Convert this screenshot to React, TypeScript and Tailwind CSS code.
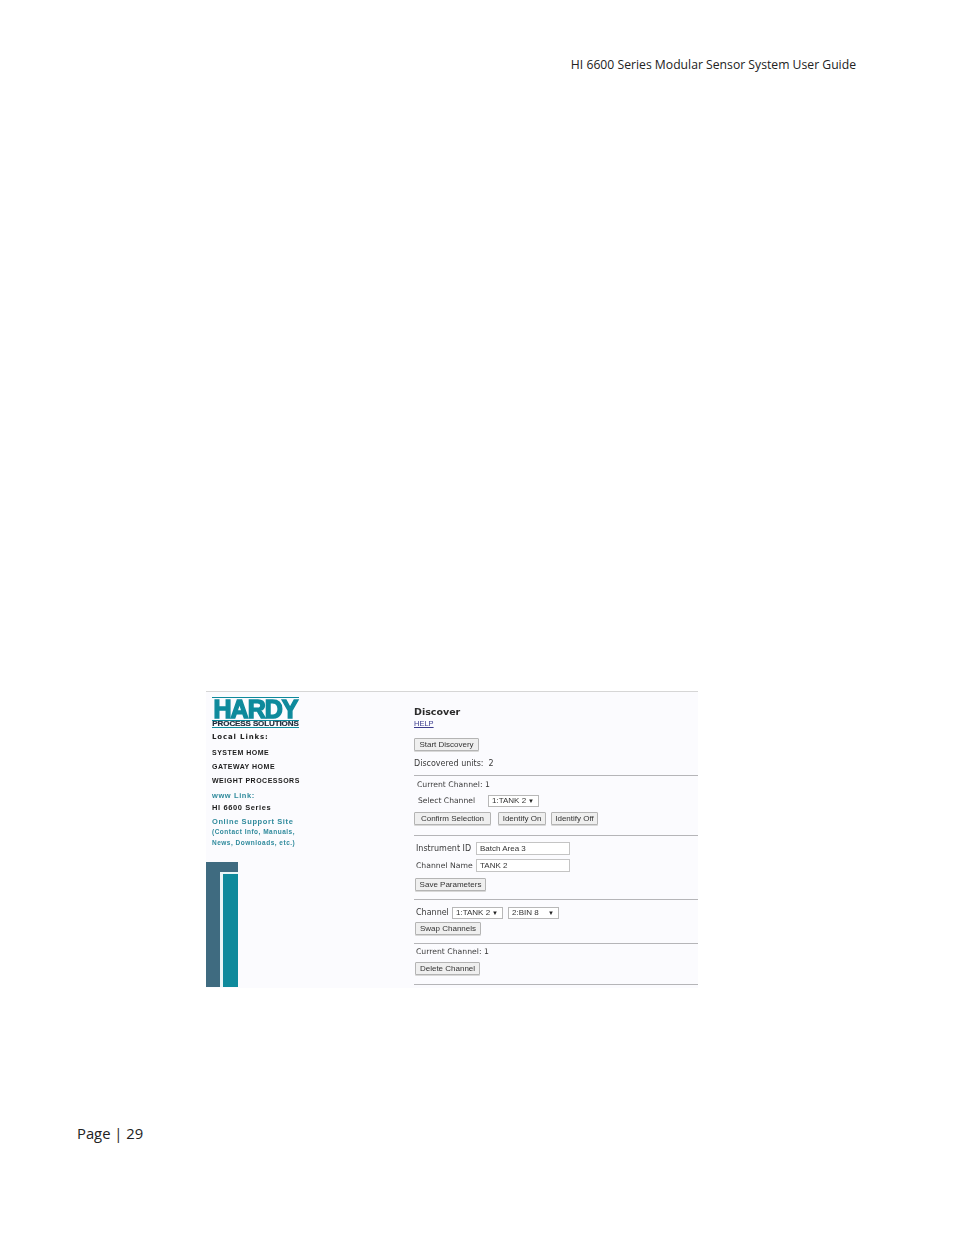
import React from 'react';

const NavLink: React.FC<{ label: string; className?: string }> = ({ label, className }) => (
    <div className={`font-['Liberation_Sans',sans-serif] font-bold leading-[10px] whitespace-nowrap ${className ?? ''}`}>
        {label}
    </div>
);

const FakeButton: React.FC<{ label: string; className?: string }> = ({ label, className }) => (
    <div className={`h-[13px] flex items-center justify-center bg-[#efefef] border border-[#b4b4b4] rounded-[1px] text-[8px] text-[#333] font-['Liberation_Sans',sans-serif] shadow-[0_1px_0_#d8d8d8] whitespace-nowrap ${className ?? ''}`}>
        {label}
    </div>
);

const FakeSelect: React.FC<{ label: string; className?: string }> = ({ label, className }) => (
    <div className={`h-[12px] flex items-center justify-between pl-[3px] pr-[4px] bg-white border border-[#b8b8b8] text-[8px] text-[#333] font-['Liberation_Sans',sans-serif] whitespace-nowrap ${className ?? ''}`}>
        <span>{label}</span>
        <span className="text-[6px] text-[#222]">▼</span>
    </div>
);

const Label: React.FC<{ children: React.ReactNode; className?: string }> = ({ children, className }) => (
    <div className={`leading-[12px] text-[#3a3a3a] whitespace-nowrap font-['DejaVu_Sans',sans-serif] ${className ?? 'text-[8px]'}`}>
        {children}
    </div>
);

const FakeInput: React.FC<{ value: string }> = ({ value }) => (
    <div className="w-[94px] h-[13px] flex items-center pl-[3px] bg-white border border-[#c4c4c4] text-[8px] text-[#333] font-['Liberation_Sans',sans-serif]">
        {value}
    </div>
);

const Divider: React.FC = () => <div className="h-[1px] bg-[#b5b5b8]" />;

export default function App() {
    return (
        <div className="w-[954px] h-[1235px] flex flex-col bg-white overflow-hidden font-['Open_Sans',sans-serif]">
            {/* Header */}
            <div className="pt-[56px] pr-[98px] text-right text-[12.2px] leading-[18px] text-[#222]">
                HI 6600 Series Modular Sensor System User Guide
            </div>

            {/* Screenshot figure */}
            <div className="mt-[617px] ml-[206px] w-[492px] h-[297px] flex bg-[#fbfbfe] border-t border-[#d6d6d6] blur-[0.3px]">
                {/* Left nav */}
                <div className="w-[208px] flex flex-col">
                    <div className="pl-[6px] pt-[5px]">
                        <div className="w-[87px] h-[31px] flex flex-col">
                            <div className="h-[1px] bg-[#0e8a9c]" />
                            <div className="h-[20px] mt-[1px] flex items-center justify-center font-['Liberation_Sans',sans-serif] font-bold text-[25px] leading-[20px] tracking-[-1px] whitespace-nowrap text-[#0e8a9c] [-webkit-text-stroke:1.4px_#0e8a9c]">
                                HARDY
                            </div>
                            <div className="h-[1px] mt-[1px] bg-[#0e8a9c]" />
                            <div className="h-[6px] flex items-center justify-center font-['Liberation_Sans',sans-serif] font-bold text-[8px] leading-[6px] tracking-[-0.1px] text-[#1d2b3a] whitespace-nowrap [-webkit-text-stroke:0.2px_#1d2b3a]">
                                PROCESS SOLUTIONS
                            </div>
                            <div className="h-[1px] bg-[#0e8a9c]" />
                        </div>
                        <div className="mt-[4px] font-['DejaVu_Sans',sans-serif] font-bold text-[7px] leading-[10px] tracking-[0.85px] text-[#222]">
                            Local Links:
                        </div>
                        <NavLink label="SYSTEM HOME" className="mt-[6px] text-[7px] tracking-[0.5px] text-[#1c1c1c]" />
                        <NavLink label="GATEWAY HOME" className="mt-[4px] text-[7px] tracking-[0.5px] text-[#1c1c1c]" />
                        <NavLink label="WEIGHT PROCESSORS" className="mt-[4px] text-[7px] tracking-[0.5px] text-[#1c1c1c]" />
                        <NavLink label="www Link:" className="mt-[5px] text-[7.5px] tracking-[0.6px] text-[#2f8a9c]" />
                        <NavLink label="HI 6600 Series" className="mt-[2px] text-[7.5px] tracking-[0.6px] text-[#1c1c1c]" />
                        <NavLink label="Online Support Site" className="mt-[4px] text-[7.5px] tracking-[0.6px] text-[#2f8a9c]" />
                        <div className="font-['Liberation_Sans',sans-serif] font-bold text-[6.5px] leading-[10.5px] tracking-[0.5px] text-[#2f8a9c] whitespace-nowrap">
                            (Contact Info, Manuals,
                            <br />
                            News, Downloads, etc.)
                        </div>
                    </div>
                    <div className="mt-auto mb-[1px] w-[32px] h-[125px] pt-[10px] pl-[14px] bg-[#3f6b80]">
                        <div className="h-full border-l-[3px] border-t-[2px] border-[#eaf6f8] bg-[#0e8a9c]" />
                    </div>
                </div>

                {/* Right form */}
                <div className="flex-1 flex flex-col">
                    <div className="h-[83px] flex flex-col">
                        <div className="mt-[14px] font-['DejaVu_Sans',sans-serif] font-bold text-[9.5px] leading-[12px] text-[#2b2b2b]">
                            Discover
                        </div>
                        <div className="text-[7.5px] leading-[11px] text-[#3a3a8c] underline font-['Liberation_Sans',sans-serif]">
                            HELP
                        </div>
                        <FakeButton label="Start Discovery" className="w-[65px] mt-[9px]" />
                        <Label className="mt-[7px] text-[8px]">Discovered units:&nbsp; 2</Label>
                    </div>
                    <Divider />
                    <div className="h-[59px] flex flex-col pt-[3px]">
                        <Label className="ml-[3px] text-[7.7px]">Current Channel: 1</Label>
                        <div className="mt-[4px] ml-[4px] flex items-center">
                            <Label className="w-[70px] text-[7.6px]">Select Channel</Label>
                            <FakeSelect label="1:TANK 2" className="w-[51px]" />
                        </div>
                        <div className="mt-[5px] flex">
                            <FakeButton label="Confirm Selection" className="w-[77px] font-['DejaVu_Sans',sans-serif] text-[8px]" />
                            <FakeButton label="Identify On" className="w-[48px] ml-[7px]" />
                            <FakeButton label="Identify Off" className="w-[47px] ml-[5px]" />
                        </div>
                    </div>
                    <Divider />
                    <div className="h-[63px] flex flex-col pt-[6px] pl-[2px]">
                        <div className="flex items-center">
                            <Label className="w-[60px] pt-[1px] text-[8px]">Instrument ID</Label>
                            <FakeInput value="Batch Area 3" />
                        </div>
                        <div className="mt-[4px] flex items-center">
                            <Label className="w-[60px] pt-[1px] text-[7.7px]">Channel Name</Label>
                            <FakeInput value="TANK 2" />
                        </div>
                        <FakeButton label="Save Parameters" className="w-[71px] mt-[6px] ml-[-1px]" />
                    </div>
                    <Divider />
                    <div className="h-[43px] flex flex-col pt-[7px] pl-[2px]">
                        <div className="flex items-center">
                            <Label className="w-[36px] text-[8px]">Channel</Label>
                            <FakeSelect label="1:TANK 2" className="w-[51px]" />
                            <FakeSelect label="2:BIN 8" className="w-[51px] ml-[5px] border-[#6f93c4]" />
                        </div>
                        <FakeButton label="Swap Channels" className="w-[66px] mt-[3px] ml-[-1px]" />
                    </div>
                    <Divider />
                    <div className="h-[40px] flex flex-col pt-[2px] pl-[2px]">
                        <Label className="text-[7.7px]">Current Channel: 1</Label>
                        <FakeButton label="Delete Channel" className="w-[65px] mt-[4px] ml-[-1px]" />
                    </div>
                    <Divider />
                </div>
            </div>

            {/* Footer */}
            <div className="mt-[135px] pl-[77px] text-[14.8px] leading-[20px] text-[#222]">
                Page | 29
            </div>
        </div>
    );
}
